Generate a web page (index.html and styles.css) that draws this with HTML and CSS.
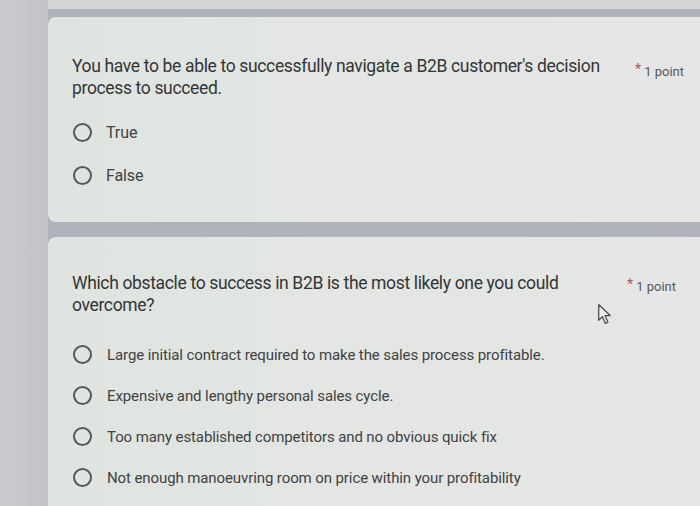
FILE: index.html
```html
<!DOCTYPE html>
<html lang="en">
<head>
<meta charset="utf-8">
<title>Quiz</title>
<link rel="stylesheet" href="styles.css">
</head>
<body>
<div class="screen">
  <div class="gutter"></div>
  <div class="column">
    <div class="topline"></div>
    <section class="card card-first">
      <div class="question">
        <div class="q-title">You have to be able to successfully navigate a B2B customer's decision process to succeed.</div>
        <div class="q-points"><span class="req">*</span> 1 point</div>
      </div>
      <div class="options">
        <label class="option"><span class="radio"></span><span class="opt-text opt-large">True</span></label>
        <label class="option"><span class="radio"></span><span class="opt-text opt-large">False</span></label>
      </div>
    </section>
    <section class="card card-second">
      <div class="question">
        <div class="q-title">Which obstacle to success in B2B is the most likely one you could overcome?</div>
        <div class="q-points q-points-low"><span class="req">*</span> 1 point</div>
      </div>
      <div class="options options-tight">
        <label class="option"><span class="radio"></span><span class="opt-text">Large initial contract required to make the sales process profitable.</span></label>
        <label class="option"><span class="radio"></span><span class="opt-text">Expensive and lengthy personal sales cycle.</span></label>
        <label class="option"><span class="radio"></span><span class="opt-text">Too many established competitors and no obvious quick fix</span></label>
        <label class="option"><span class="radio"></span><span class="opt-text">Not enough manoeuvring room on price within your profitability</span></label>
      </div>
      <svg class="cursor" width="17" height="23" viewBox="0 0 16 22" aria-hidden="true">
        <path d="M1.5 1.5 L1.5 16.5 L5 13 L7.8 19.5 L10.3 18.4 L7.6 12 L12.5 12 Z" fill="#eceeed" stroke="#4a4c4e" stroke-width="1.2" stroke-linejoin="round"/>
      </svg>
    </section>
  </div>
</div>
</body>
</html>
```

FILE: styles.css
```css
* { box-sizing: border-box; }

html, body {
  margin: 0;
  padding: 0;
}

body {
  width: 700px;
  height: 506px;
  overflow: hidden;
  background: #c5c7cb;
  font-family: "Roboto", "Liberation Sans", sans-serif;
  color: #3b3c3d;
}

.screen {
  display: flex;
  width: 700px;
  height: 506px;
}

.gutter {
  width: 48px;
  flex: none;
  background: linear-gradient(90deg, #c9cbcf 0%, #c2c4c9 100%);
}

.column {
  flex: 1;
  display: flex;
  flex-direction: column;
  background: #b0b3bc;
}

.topline {
  height: 9px;
  flex: none;
  background: #d4d5d7;
}

.card {
  position: relative;
  flex: none;
  background: linear-gradient(90deg, #dfe4e0 0%, #e3e6e3 40%, #e5e6e5 100%);
  border-radius: 8px 0 0 8px;
  padding: 0 16px 0 24px;
}

.card-first {
  margin-top: 8px;
  height: 205px;
  padding-top: 38px;
}

.card-second {
  margin-top: 15px;
  flex: 1;
  padding-top: 35px;
  border-radius: 8px 0 0 0;
}

.question {
  display: flex;
  justify-content: space-between;
  align-items: flex-start;
}

.q-title {
  width: 540px;
  font-size: 17.5px;
  letter-spacing: -0.35px;
  line-height: 22px;
  color: #333536;
}

.q-points {
  font-size: 13px;
  line-height: 20px;
  color: #55585b;
  padding-top: 4px;
  white-space: nowrap;
}

.q-points-low {
  padding-top: 2px;
  margin-right: 8px;
}

.req {
  color: #a9585d;
  font-size: 14px;
  vertical-align: 2px;
}

.options {
  display: flex;
  flex-direction: column;
  margin-top: 12px;
}

.options-tight {
  margin-top: 18px;
}

.option {
  display: flex;
  align-items: center;
  height: 43px;
}

.options-tight .option {
  height: 41px;
}

.radio {
  width: 19px;
  height: 19px;
  border: 2px solid #55575a;
  border-radius: 50%;
  flex: none;
  margin-left: 1px;
}

.opt-text {
  margin-left: 15px;
  font-size: 15px;
  letter-spacing: -0.1px;
  color: #404244;
}

.opt-large {
  margin-left: 14px;
  font-size: 16px;
}

.cursor {
  position: absolute;
  left: 549px;
  top: 66px;
}
```
